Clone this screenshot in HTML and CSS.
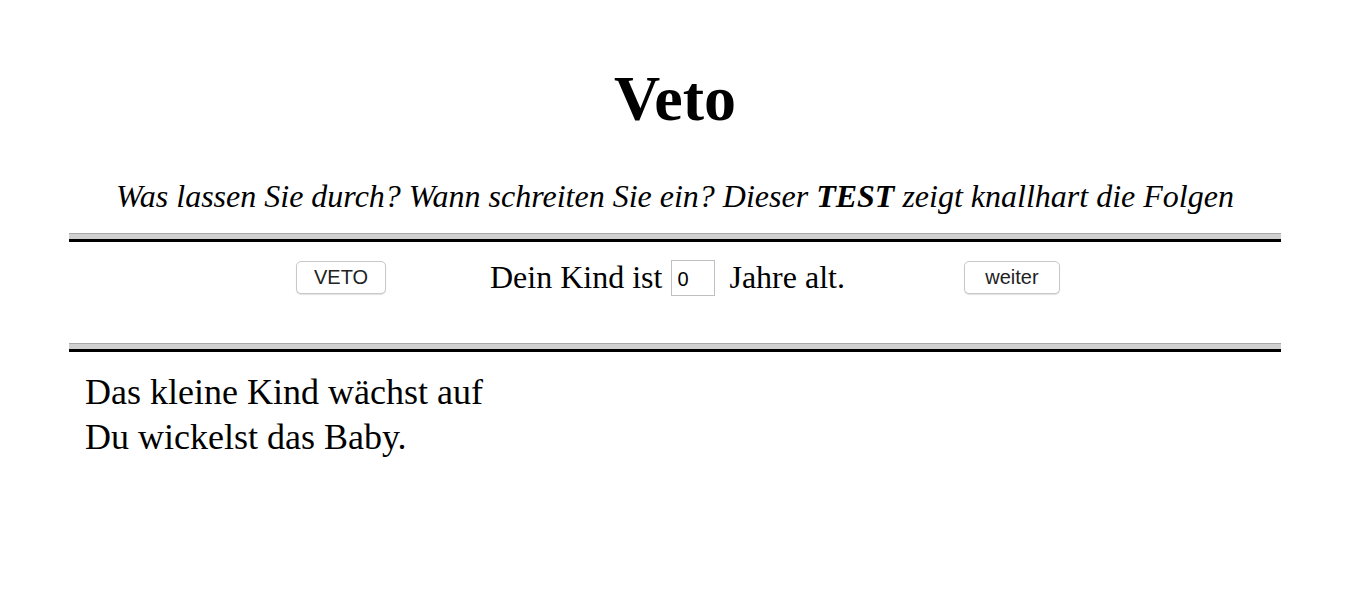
FILE: index.html
```html
<!DOCTYPE html>
<html lang="de">
<head>
<meta charset="utf-8">
<title>Veto</title>
<link rel="stylesheet" href="styles.css">
</head>
<body>
<header class="head">
  <h1 class="title">Veto</h1>
  <p class="subtitle">Was lassen Sie durch? Wann schreiten Sie ein? Dieser <b>TEST</b> zeigt knallhart die Folgen</p>
</header>
<div class="rule"></div>
<div class="controls">
  <button class="btn btn-veto" type="button">VETO</button>
  <div class="age"><span>Dein Kind ist</span><input class="age-input" type="text" value="0"><span>Jahre alt.</span></div>
  <button class="btn btn-next" type="button">weiter</button>
</div>
<div class="rule"></div>
<div class="story">
  <div class="line">Das kleine Kind wächst auf</div>
  <div class="line">Du wickelst das Baby.</div>
</div>
</body>
</html>
```
FILE: styles.css
```css
html, body {
  margin: 0;
  padding: 0;
  background: #fff;
}
body {
  font-family: "Liberation Serif", "Times New Roman", serif;
  color: #000;
}
.head {
  display: flex;
  flex-direction: column;
  align-items: center;
  padding-top: 62px;
}
.title {
  margin: 0;
  font-size: 64px;
  line-height: 74px;
  font-weight: bold;
}
.subtitle {
  margin: 40px 0 0;
  font-size: 32px;
  line-height: 40px;
  font-style: italic;
}
.rule {
  margin: 0 69px;
  border-top: 1px solid #a8a8a8;
  background: #d0d0d0;
  border-bottom: 3px solid #000;
  height: 5px;
}
.head + .rule {
  margin-top: 17px;
}
.controls {
  display: flex;
  align-items: center;
  height: 101px;
  padding: 0 0 0 296px;
  box-sizing: border-box;
}
.controls > * {
  margin-top: -30px;
}
.btn {
  font-family: "Liberation Sans", Arial, sans-serif;
  font-size: 20px;
  color: #222;
  background: #fff;
  border: 1px solid #c8c8c8;
  border-radius: 5px;
  height: 33px;
  padding: 0;
  box-shadow: 0 1px 1px rgba(0,0,0,0.12);
}
.btn-veto { width: 90px; }
.btn-next { width: 96px; margin-left: 119px; }
.age {
  margin-left: 104px;
  font-size: 32px;
  display: flex;
  align-items: center;
}
.age-input {
  width: 44px;
  height: 36px;
  box-sizing: border-box;
  border: 1px solid #c0c0c0;
  font-family: "Liberation Sans", Arial, sans-serif;
  font-size: 20px;
  padding: 4px 0 0 5px;
  margin: 0 14px 0 9px;
}
.story {
  padding: 18px 0 0 85px;
  font-size: 36px;
}
.line {
  line-height: 45px;
}
```
